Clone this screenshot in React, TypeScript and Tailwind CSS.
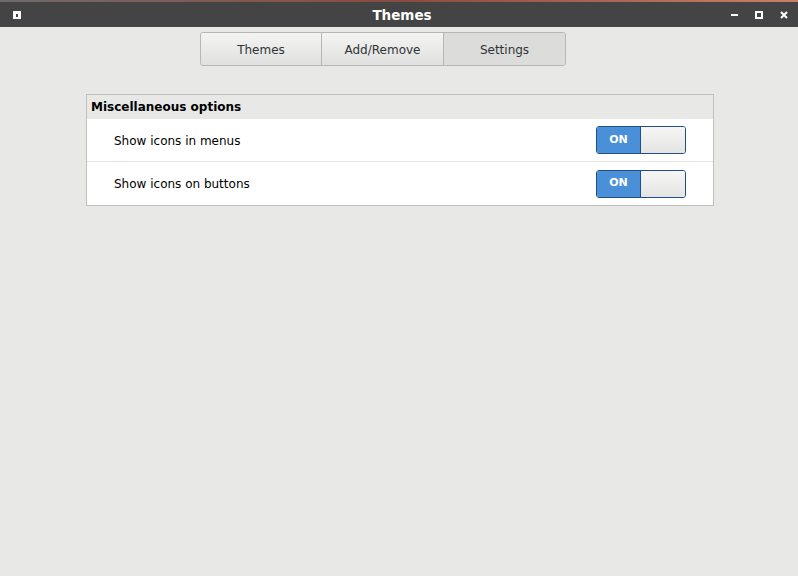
import React from "react";

function Toggle() {
  return (
    <div className="flex h-[28px] w-[90px] overflow-hidden rounded-[3px] border border-[#1f4f86]">
      <div className="flex w-[43px] items-center justify-center bg-[#4a90d9] text-[11px] font-bold text-white">
        ON
      </div>
      <div className="flex-1 border-l border-[#1f4f86] bg-gradient-to-b from-[#f6f6f5] to-[#e4e4e3]" />
    </div>
  );
}

export default function App() {
  return (
    <div
      className="flex h-[576px] w-[798px] flex-col bg-[#e8e8e7] text-[#2e3436]"
      style={{ fontFamily: '"DejaVu Sans", Verdana, sans-serif' }}
    >
      <div className="h-[2px] bg-gradient-to-r from-[#6f6a6a] via-[#8a4b3e] to-[#c8806a]" />
      <div className="grid h-[25px] grid-cols-[1fr_auto_1fr] items-center bg-[#444444]">
        <div className="flex">
          <div className="ml-[13px] flex h-[8px] w-[8px] items-center justify-center bg-white">
            <div className="mt-[1px] h-[3px] w-[2px] bg-[#444444]" />
          </div>
        </div>
        <div className="pl-[6px] pt-[1px] text-center text-[13.5px] font-bold text-white">Themes</div>
        <div className="flex items-center justify-end gap-[17px] pr-[10px]">
          <div className="h-[2px] w-[7px] bg-white" />
          <div className="h-[8px] w-[8px] border-2 border-white" />
          <svg width="8" height="8" viewBox="0 0 8 8">
            <path d="M1 1 L7 7 M7 1 L1 7" stroke="white" strokeWidth="2" />
          </svg>
        </div>
      </div>
      <div className="flex pl-[200px] pt-[5px]">
        <div className="flex h-[34px] overflow-hidden rounded-[3px] border border-[#b6b6b3] text-[12px]">
          <div className="flex w-[121px] items-center justify-center border-r border-[#b6b6b3] bg-gradient-to-b from-[#f4f4f3] to-[#e0e0df] pt-[1px]">
            Themes
          </div>
          <div className="flex w-[122px] items-center justify-center border-r border-[#b6b6b3] bg-gradient-to-b from-[#f4f4f3] to-[#e0e0df] pt-[1px]">
            Add/Remove
          </div>
          <div className="flex w-[121px] items-center justify-center bg-[#dcdcdb] pt-[1px]">Settings</div>
        </div>
      </div>
      <div className="ml-[86px] mt-[28px] w-[628px] border border-[#c0c0bd] bg-white">
        <div className="flex h-[24px] items-center bg-[#e8e8e7] pl-[4px] text-[12px] font-bold text-black">
          Miscellaneous options
        </div>
        <div className="flex h-[43px] items-center justify-between border-b border-[#e4e4e3] pl-[27px] pr-[27px] text-[12px] text-black">
          <span className="pt-[1px]">Show icons in menus</span>
          <Toggle />
        </div>
        <div className="flex h-[43px] items-center justify-between pl-[27px] pr-[27px] text-[12px] text-black">
          <span>Show icons on buttons</span>
          <Toggle />
        </div>
      </div>
    </div>
  );
}
